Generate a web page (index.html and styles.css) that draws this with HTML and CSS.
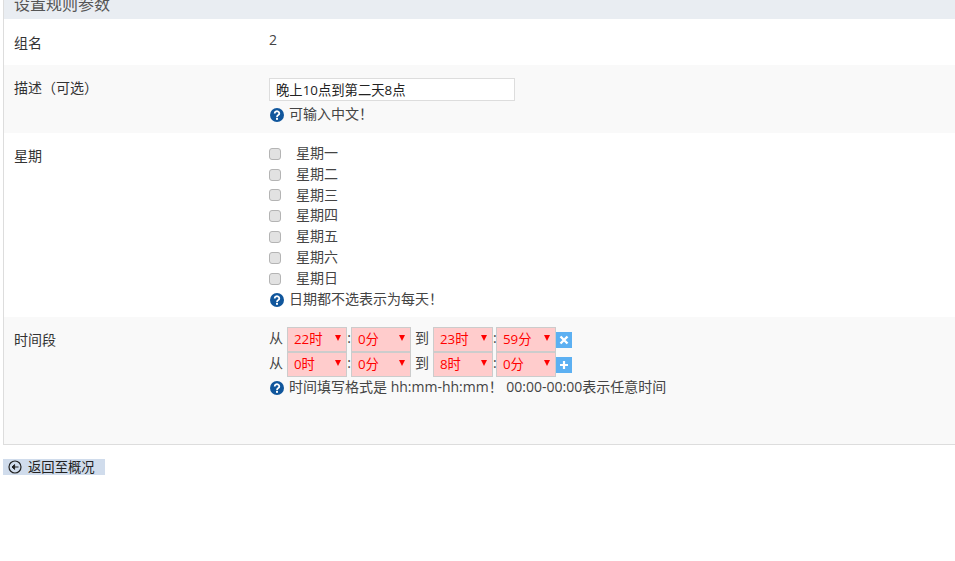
FILE: index.html
```html
<!DOCTYPE html>
<html lang="zh-CN">
  <head>
    <meta charset="UTF-8" />
    <title>设置规则参数</title>
    <link rel="stylesheet" href="styles.css">
  </head>
  <body>
    <div class="panel">
      <div class="panel-title">设置规则参数</div>

      <div class="row row-name">
        <div class="row-label">组名</div>
        <div class="row-value">2</div>
      </div>

      <div class="row row-alt row-desc">
        <div class="row-label">描述（可选）</div>
        <div class="row-value">
          <input class="text-input" type="text" value="晚上10点到第二天8点" />
          <div class="hint">
            <svg class="hint-icon" viewBox="0 0 14 14"><circle cx="7" cy="7" r="7" fill="#10569c"/><path d="M4.7 5.4a2.3 2.1 0 1 1 3.6 1.7c-.9.6-1.3 1-1.3 1.9" fill="none" stroke="#fff" stroke-width="1.8"/><rect x="6" y="9.8" width="2" height="2" fill="#fff"/></svg>
            <span>可输入中文！</span>
          </div>
        </div>
      </div>

      <div class="row row-week">
        <div class="row-label">星期</div>
        <div class="row-value">
          <label class="day"><input type="checkbox" /><span>星期一</span></label>
          <label class="day"><input type="checkbox" /><span>星期二</span></label>
          <label class="day"><input type="checkbox" /><span>星期三</span></label>
          <label class="day"><input type="checkbox" /><span>星期四</span></label>
          <label class="day"><input type="checkbox" /><span>星期五</span></label>
          <label class="day"><input type="checkbox" /><span>星期六</span></label>
          <label class="day"><input type="checkbox" /><span>星期日</span></label>
          <div class="hint hint-week">
            <svg class="hint-icon" viewBox="0 0 14 14"><circle cx="7" cy="7" r="7" fill="#10569c"/><path d="M4.7 5.4a2.3 2.1 0 1 1 3.6 1.7c-.9.6-1.3 1-1.3 1.9" fill="none" stroke="#fff" stroke-width="1.8"/><rect x="6" y="9.8" width="2" height="2" fill="#fff"/></svg>
            <span>日期都不选表示为每天！</span>
          </div>
        </div>
      </div>

      <div class="row row-alt row-time">
        <div class="row-label">时间段</div>
        <div class="row-value">
          <div class="time-line">
            <span class="word">从</span>
            <span class="pick"><select><option>22时</option></select></span>
            <span class="colon">:</span>
            <span class="pick"><select><option>0分</option></select></span>
            <span class="word word-to">到</span>
            <span class="pick"><select><option>23时</option></select></span>
            <span class="colon colon-narrow">:</span>
            <span class="pick"><select><option>59分</option></select></span>
            <span class="time-btn">
              <svg viewBox="0 0 16 16"><path d="M4.5 4.5l7 7M11.5 4.5l-7 7" stroke="#fff" stroke-width="2.4" fill="none"/></svg>
            </span>
          </div>
          <div class="time-line">
            <span class="word">从</span>
            <span class="pick"><select><option>0时</option></select></span>
            <span class="colon">:</span>
            <span class="pick"><select><option>0分</option></select></span>
            <span class="word word-to">到</span>
            <span class="pick"><select><option>8时</option></select></span>
            <span class="colon colon-narrow">:</span>
            <span class="pick"><select><option>0分</option></select></span>
            <span class="time-btn">
              <svg viewBox="0 0 16 16"><path d="M8 4v8M4 8h8" stroke="#fff" stroke-width="2.2" fill="none"/></svg>
            </span>
          </div>
          <div class="hint hint-time">
            <svg class="hint-icon" viewBox="0 0 14 14"><circle cx="7" cy="7" r="7" fill="#10569c"/><path d="M4.7 5.4a2.3 2.1 0 1 1 3.6 1.7c-.9.6-1.3 1-1.3 1.9" fill="none" stroke="#fff" stroke-width="1.8"/><rect x="6" y="9.8" width="2" height="2" fill="#fff"/></svg>
            <span>时间填写格式是 hh:mm-hh:mm！ 00:00-00:00表示任意时间</span>
          </div>
        </div>
      </div>
    </div>

    <a class="back-link" href="#">
      <svg viewBox="0 0 14 14"><circle cx="7" cy="7" r="6" fill="none" stroke="#222" stroke-width="1.2"/><path d="M10.5 7H6M6.6 4.6L4 7l2.6 2.4z" fill="#222" stroke="#222"/></svg>
      <span>返回至概况</span>
    </a>
  </body>
</html>
```

FILE: styles.css
```css
html {
  overflow: hidden;
}
body {
  margin: 0;
  background: #fff;
  color: #444;
  font-family: "Open Sans", "Noto Sans CJK SC", sans-serif;
  font-size: 14px;
  line-height: 20px;
}
.panel {
  margin: -11px 0 0 3px;
  border-left: 1px solid #ddd;
  border-bottom: 1px solid #ddd;
}
.panel-title {
  height: 30px;
  line-height: 30px;
  padding-left: 10px;
  background: #e9edf2;
  color: #555;
  font-size: 16px;
}
.row {
  display: flex;
  padding-left: 10px;
}
.row-alt {
  background: #f9f9f9;
}
.row-label {
  width: 255px;
  color: #333;
}
.row-value {
  flex: 1;
}
.row-name {
  height: 46px;
  padding-top: 11px;
  box-sizing: border-box;
}
.row-name .row-label {
  padding-top: 3px;
}
.row-desc {
  height: 68px;
  box-sizing: border-box;
  padding-top: 13px;
}
.row-week {
  height: 184px;
  box-sizing: border-box;
  padding-top: 10px;
}
.row-week .row-label {
  padding-top: 3px;
}
.row-time {
  height: 127px;
  box-sizing: border-box;
  padding-top: 10px;
}
.row-time .row-label {
  padding-top: 3px;
}
.text-input {
  display: block;
  box-sizing: border-box;
  width: 246px;
  height: 23px;
  padding: 0 6px;
  border: 1px solid #ddd;
  background: #fff;
  color: #222;
  font: 13.33px "Open Sans", "Noto Sans CJK SC", sans-serif;
}
.hint {
  display: flex;
  align-items: center;
  gap: 5px;
  height: 20px;
  margin-top: 4px;
  padding-left: 1px;
}
.hint span {
  margin-bottom: 2px;
}
.hint-week {
  margin-top: 1px;
}
.hint-time {
  margin-top: 1px;
}
.hint-icon {
  width: 14px;
  height: 14px;
  flex: none;
}
.day {
  display: flex;
  align-items: center;
  height: 20.8px;
}
.day span {
  margin-bottom: 1px;
}
.day input {
  appearance: none;
  box-sizing: border-box;
  width: 12px;
  height: 12px;
  margin: 1px 15px 0 0;
  border: 1px solid #b4b4b4;
  border-radius: 3px;
  background: #e2e2e2;
}
.time-line {
  display: flex;
  align-items: center;
  height: 25px;
}
.word {
  width: 18px;
  margin-top: -4px;
}
.word-to {
  width: 14px;
  margin: -4px 4px 0 4px;
}
.colon {
  width: 4px;
  text-align: center;
  margin-top: -3px;
}
.colon-narrow {
  width: 3px;
}
.pick {
  position: relative;
  display: block;
  width: 60px;
  height: 25px;
}
.pick::after {
  content: "";
  position: absolute;
  top: 8px;
  right: 6px;
  border-style: solid;
  border-width: 6px 3.5px 0;
  border-color: #f00 transparent transparent;
}
.pick select {
  appearance: none;
  display: block;
  box-sizing: border-box;
  width: 100%;
  height: 100%;
  padding: 0 0 1px 6px;
  border: 1px solid #ccc;
  border-radius: 0;
  background: #fcc;
  color: #f00;
  font: 13.33px "Open Sans", "Noto Sans CJK SC", sans-serif;
}
.time-btn {
  display: block;
  width: 16px;
  height: 16px;
  background: #5cb0f2;
}
.time-btn svg {
  display: block;
  width: 16px;
  height: 16px;
}
.back-link {
  display: flex;
  align-items: center;
  gap: 6px;
  width: 102px;
  height: 16px;
  margin: 14px 0 0 3px;
  padding-left: 5px;
  box-sizing: border-box;
  background: #d0dcec;
  color: #222;
  text-decoration: none;
  font-size: 13.33px;
}
.back-link svg {
  width: 14px;
  height: 14px;
  flex: none;
}
```
